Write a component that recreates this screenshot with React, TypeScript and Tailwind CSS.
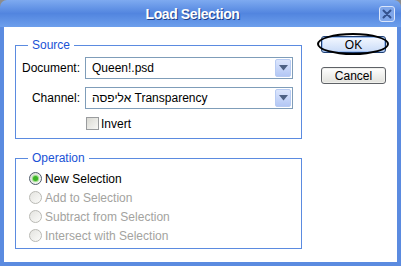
import React from 'react';

const ComboArrow = () => (
  <div className="w-[16px] h-[18px] mr-[1px] rounded-[2px] border border-[#b7cbf3] bg-linear-to-b from-[#dce6fd] to-[#b3c7f5] flex items-center justify-center">
    <svg width="9" height="6" viewBox="0 0 9 6">
      <path d="M0 0h9L4.5 5.5z" fill="#4d6185" />
    </svg>
  </div>
);

const Combo = ({ value }: { value: string }) => (
  <div className="w-[208px] h-[22px] border border-[#7f9db9] bg-white flex items-center">
    <span className="flex-1 pl-[6px] text-[12px] text-black whitespace-nowrap overflow-hidden">{value}</span>
    <ComboArrow />
  </div>
);

const Radio = ({ label, checked, disabled }: { label: string; checked?: boolean; disabled?: boolean }) => (
  <div className="h-[19px] flex items-center">
    <span
      className={
        disabled
          ? 'w-[13px] h-[13px] rounded-full border border-[#b9b9b4] bg-linear-to-br from-[#e4e4e0] to-[#fbfbf9] flex items-center justify-center'
          : 'w-[13px] h-[13px] rounded-full border border-[#4f5b6b] bg-linear-to-br from-[#dcdcd7] to-[#fbfbf9] flex items-center justify-center'
      }
    >
      {checked && <span className="w-[5px] h-[5px] rounded-full bg-[#3db226] shadow-[0_0_1px_1px_#8fdc7c]" />}
    </span>
    <span className={disabled ? 'ml-[3px] text-[#a3a3a0]' : 'ml-[3px] text-black'}>{label}</span>
  </div>
);

export default function App() {
  return (
    <div className="w-[401px] h-[266px] bg-[#8c8c8c] flex flex-col font-['Liberation_Sans',sans-serif] text-[12px] leading-[14px]">
      {/* title bar */}
      <div className="h-[27px] rounded-t-[7px] bg-linear-to-b from-[#7eaaf0] via-[#5285df] to-[#6d9fec] flex items-center">
        <div className="flex-1 pl-[6px] text-center text-white font-bold text-[14px] tracking-[-0.4px] [text-shadow:1px_1px_0_#1d3f8a]">
          Load Selection
        </div>
        <div className="w-[16px] h-[16px] mr-[6px] rounded-[3px] border border-[#dbe6fb] bg-[#7fa6ea] flex items-center justify-center">
          <svg width="10" height="10" viewBox="0 0 10 10">
            <path d="M1.5 1.5l7 7M8.5 1.5l-7 7" stroke="#34528f" strokeWidth="2" strokeLinecap="round" />
          </svg>
        </div>
      </div>

      {/* client area */}
      <div className="flex-1 bg-white border-x-4 border-b-4 border-[#5b8be0] flex pl-[11px]">
        <div className="w-[287px] mt-[11px] flex flex-col gap-[12px]">
          <fieldset className="border border-[#5b8be0]">
            <legend className="ml-[12px] px-[4px] text-[#1a52d6]">Source</legend>
            <div className="pt-[5px] pb-[8px] flex flex-col gap-[8px]">
              <div className="flex items-center">
                <span className="w-[64px] text-right text-black">Document:</span>
                <div className="ml-[5px]">
                  <Combo value="Queen!.psd" />
                </div>
              </div>
              <div className="flex items-center">
                <span className="w-[64px] text-right text-black">Channel:</span>
                <div className="ml-[5px]">
                  <Combo value="אליפסה Transparency" />
                </div>
              </div>
              <div className="h-[13px] flex items-center pl-[70px]">
                <span className="w-[13px] h-[13px] border border-[#9a9c9e] bg-linear-to-br from-[#d9d9d3] to-[#f8f8f6]" />
                <span className="ml-[2px] text-black">Invert</span>
              </div>
            </div>
          </fieldset>

          <fieldset className="border border-[#5b8be0]">
            <legend className="ml-[12px] px-[4px] text-[#1a52d6]">Operation</legend>
            <div className="pt-[4px] pb-[3px] pl-[13px] flex flex-col">
              <Radio label="New Selection" checked />
              <Radio label="Add to Selection" disabled />
              <Radio label="Subtract from Selection" disabled />
              <Radio label="Intersect with Selection" disabled />
            </div>
          </fieldset>
        </div>

        <div className="w-[65px] ml-[19px] mt-[9px] flex flex-col">
          <div className="relative">
            <button className="w-full h-[17px] rounded-[3px] border border-[#1f3f73] bg-linear-to-b from-[#f4f8ff] to-[#c9dbf8] shadow-[inset_0_0_0_1px_#9fc0f2] text-black text-[12px] leading-[14px] flex items-center justify-center">
              OK
            </button>
            <div className="absolute -left-[4px] -right-[3px] -top-[3px] -bottom-[2px] rounded-[50%] border-[2.5px] border-black" />
          </div>
          <button className="mt-[14px] w-full h-[17px] rounded-[3px] border border-[#5e6166] bg-linear-to-b from-[#ffffff] to-[#e1e1dc] shadow-[inset_0_0_0_1px_#f0f0ec] text-black text-[12px] leading-[14px] flex items-center justify-center">
            Cancel
          </button>
        </div>
      </div>
    </div>
  );
}
